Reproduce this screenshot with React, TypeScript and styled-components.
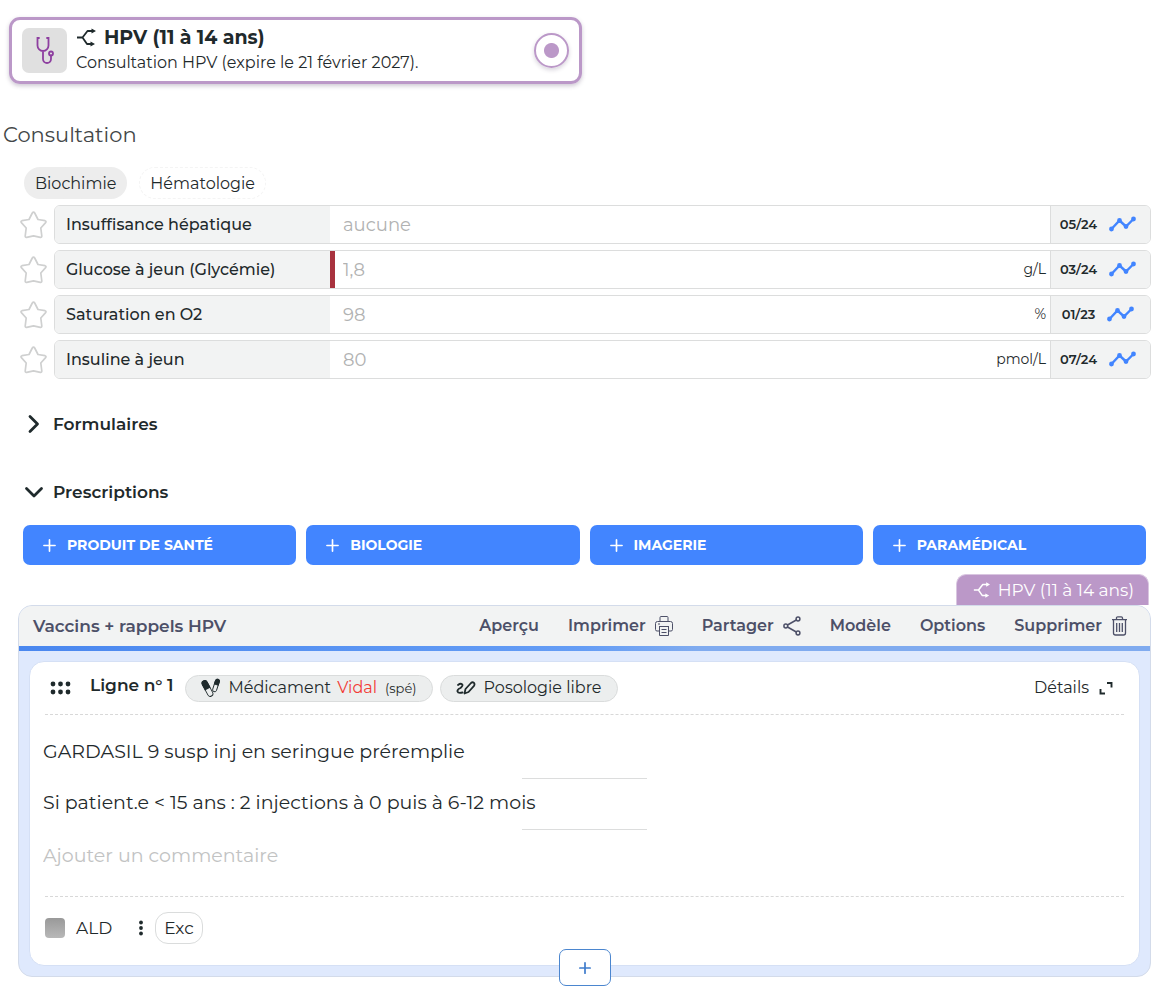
import React from "react";
import styled, { createGlobalStyle } from "styled-components";

const ink = "#1f2a2c";
const slate = "#4d5068";
const blue = "#4285ff";
const mauve = "#bb98c8";
const line = "#dcdddd";
const soft = "#f2f3f3";

const GlobalStyle = createGlobalStyle`
  *, *::before, *::after { box-sizing: border-box; }
  body { margin: 0; background: #fff; color: ${ink}; font-family: Montserrat, Inter, "Liberation Sans", sans-serif; font-size: 16px; line-height: 24px; }
  button, input { font: inherit; color: inherit; }
  button { background: none; border: 0; padding: 0; cursor: pointer; }
  h1, h2, p { margin: 0; }
  svg { display: block; flex: none; }
`;

const Page = styled.main`
  padding: 17px 9px 13px;
`;

const PathwayCard = styled.label`
  display: flex;
  align-items: center;
  gap: 9px;
  max-width: 573px;
  height: 67px;
  padding: 0 10px;
  border: 3px solid ${mauve};
  border-radius: 11px;
  box-shadow: 0 2px 4px rgba(60, 40, 80, 0.25);
`;

const PathwayIcon = styled.span`
  display: grid;
  place-items: center;
  flex: none;
  width: 45px;
  height: 45px;
  border-radius: 7px;
  background: #e0e0e0;
  color: #8e3fa0;
`;

const PathwayText = styled.span`
  flex: 1;
  display: flex;
  flex-direction: column;
  padding-bottom: 1px;
`;

const PathwayTitle = styled.span`
  display: flex;
  align-items: center;
  gap: 8px;
  font-size: 19px;
  line-height: 26px;
  font-weight: 700;
`;

const PathwayNote = styled.span`
  font-size: 16px;
  line-height: 24px;
`;

const PathwayRadio = styled.input`
  appearance: none;
  flex: none;
  width: 35px;
  height: 35px;
  margin: 0;
  border: 2px solid ${mauve};
  border-radius: 50%;
  background: radial-gradient(circle, ${mauve} 7px, #fff 8px);
  box-shadow: 0 2px 4px rgba(60, 40, 80, 0.2);
`;

const PageTitle = styled.h1`
  margin: 37px 0 0 -6px;
  font-size: 21px;
  line-height: 28px;
  font-weight: 400;
  color: #434748;
`;

const Tabs = styled.div`
  display: flex;
  gap: 12px;
  margin: 18px 0 6px 15px;
`;

const Tab = styled.button<{ $active?: boolean }>`
  height: 32px;
  padding: 1px 10px 0;
  border-radius: 16px;
  background: ${(p) => (p.$active ? "#ededed" : "#fff")};
  border: 1px dashed ${(p) => (p.$active ? "#ededed" : "#f4f4f4")};
`;

const Measures = styled.div`
  display: flex;
  flex-direction: column;
  gap: 6px;
  padding-left: 11px;
`;

const MeasureRow = styled.div`
  display: flex;
  align-items: center;
  gap: 7px;
`;

const StarButton = styled.button`
  flex: none;
  color: #cfd0d0;
`;

const MeasureBox = styled.div`
  flex: 1;
  min-width: 0;
  display: flex;
  height: 39px;
  border: 1px solid ${line};
  border-radius: 6px;
  overflow: hidden;
`;

const MeasureLabel = styled.label`
  flex: none;
  width: 275px;
  padding-left: 11px;
  background: ${soft};
  font-weight: 500;
  line-height: 37px;
`;

const MeasureInput = styled.input<{ $alert?: boolean }>`
  flex: 1;
  min-width: 0;
  padding: 0 ${(p) => (p.$alert ? "8px" : "13px")};
  border: 0;
  border-left: ${(p) => (p.$alert ? "5px solid #a8323e" : "0")};
  outline: none;
  background: transparent;
  font-size: 18px;
  &::placeholder { color: #b1b2b2; opacity: 1; }
`;

const Unit = styled.span`
  padding-right: 4px;
  font-size: 14px;
  line-height: 37px;
`;

const HistoryButton = styled.button`
  display: flex;
  align-items: center;
  justify-content: center;
  gap: 12px;
  flex: none;
  width: 100px;
  padding: 0 5px 2px 0;
  border-left: 1px solid ${line};
  background: ${soft};
  font-size: 13px;
  font-weight: 600;
  svg { color: ${blue}; }
`;

const SectionToggle = styled.button`
  display: flex;
  align-items: center;
  gap: 9px;
  margin: 33px 0 0 15px;
  font-size: 17px;
  font-weight: 600;
  line-height: 24px;
  & + & { margin-top: 44px; }
`;

const AddBar = styled.div`
  display: grid;
  grid-template-columns: repeat(4, 1fr);
  gap: 10px;
  margin: 21px 5px 0 14px;
`;

const AddButton = styled.button`
  display: flex;
  align-items: center;
  gap: 11px;
  height: 40px;
  padding: 0 20px;
  border-radius: 7px;
  background: ${blue};
  color: #fff;
  font-size: 14px;
  font-weight: 700;
`;

const PathwayTag = styled.div`
  display: flex;
  align-items: center;
  gap: 8px;
  width: fit-content;
  height: 31px;
  margin: 9px 2px 0 auto;
  padding: 0 14px 0 16px;
  border: 1px solid #d9c6e0;
  border-bottom: 0;
  border-radius: 10px 10px 0 0;
  background: ${mauve};
  color: #fff;
  font-size: 17px;
`;

const Prescription = styled.section`
  position: relative;
  margin-left: 9px;
  border: 1px solid #d3dbea;
  border-radius: 14px;
  background: #dfe9fd;
`;

const PrescriptionHeader = styled.header`
  display: flex;
  align-items: center;
  justify-content: space-between;
  height: 40px;
  padding: 0 22px 0 14px;
  border-radius: 13px 13px 0 0;
  background: ${soft};
  color: ${slate};
`;

const PrescriptionTitle = styled.h2`
  font-size: 17px;
  font-weight: 600;
`;

const Actions = styled.nav`
  display: flex;
  gap: 29px;
`;

const Action = styled.button`
  display: flex;
  align-items: center;
  gap: 9px;
  font-weight: 600;
`;

const Accent = styled.div`
  height: 5px;
  background: linear-gradient(90deg, #4a87ef, #659df5 50%, #80abef 60%, #80abef);
`;

const LineCard = styled.article`
  margin: 10px;
  padding: 0 15px;
  border: 1px solid #d5e0f5;
  border-radius: 15px;
  background: #fff;
`;

const LineHeader = styled.div`
  display: flex;
  align-items: center;
  height: 53px;
  border-bottom: 1px dashed #d8d8d8;
`;

const Grip = styled.button`
  padding: 0 19px 0 5px;
`;

const LineName = styled.h2`
  margin-right: 12px;
  padding-bottom: 6px;
  font-size: 17px;
  line-height: 24px;
  font-weight: 600;
`;

const Chip = styled.button`
  display: flex;
  align-items: center;
  gap: 8px;
  height: 27px;
  margin-right: 7px;
  padding: 0 15px;
  border: 1px solid #dadcdc;
  border-radius: 14px;
  background: #eceeee;
`;

const Brand = styled.span`
  margin-left: 2px;
  color: #f23c35;
`;

const Small = styled.small`
  font-size: 13px;
`;

const Details = styled.button`
  display: flex;
  align-items: center;
  gap: 10px;
  margin-left: auto;
  padding-right: 11px;
`;

const Entry = styled.p`
  margin-left: -2px;
  font-size: 19px;
  line-height: 26px;
`;

const Divider = styled.hr`
  width: 125px;
  height: 1px;
  margin: 13px auto 11px;
  border: 0;
  background: ${line};
`;

const Body = styled.div`
  padding: 24px 0 27px;
  border-bottom: 1px dashed #d8d8d8;
`;

const CommentInput = styled.input`
  display: block;
  width: 100%;
  height: 28px;
  margin: 10px 0 0 -2px;
  padding: 0;
  border: 0;
  outline: none;
  font-size: 19px;
  &::placeholder { color: #c2c3c3; opacity: 1; }
`;

const LineFooter = styled.div`
  display: flex;
  align-items: center;
  height: 68px;
  padding-bottom: 7px;
  font-size: 17px;
`;

const AldLabel = styled.label`
  display: flex;
  align-items: center;
  gap: 11px;
`;

const AldCheck = styled.input`
  appearance: none;
  width: 20px;
  height: 20px;
  margin: 0;
  border-radius: 4px;
  background: linear-gradient(#999, #b8b8b8);
`;

const MoreButton = styled.button`
  margin: 0 11px 0 26px;
`;

const ExcButton = styled.button`
  height: 32px;
  padding: 0 8px;
  border: 1px solid #dadcdc;
  border-radius: 13px;
`;

const AddLine = styled.button`
  position: absolute;
  left: 50%;
  bottom: -10px;
  transform: translateX(-50%);
  display: grid;
  place-items: center;
  width: 52px;
  height: 37px;
  border: 1px solid #4b86cf;
  border-radius: 7px;
  background: #fff;
  color: #3f7ccc;
`;

const SplitIcon = ({ size = 20 }: { size?: number }) => (
  <svg width={size} height={size} viewBox="0 0 20 20" fill="none" stroke="currentColor" strokeWidth="1.800" strokeLinejoin="round" aria-hidden="true">
    <path d="M1 9.500h5.500L11.500 3H17M6.500 9.500l4.500 6.500h4.500" />
    <path d="M15.500.4 20 3l-4.500 2.600zM14.500 13.400 19 16l-4.500 2.600z" fill="currentColor" stroke="none" />
  </svg>
);

const StethoscopeIcon = () => (
  <svg width="20" height="30" viewBox="0 0 20 30" fill="none" stroke="currentColor" strokeWidth="1.800" strokeLinecap="round" aria-hidden="true">
    <path d="M4 2H2.500v7.500a5.500 5.500 0 0 0 11 0V2H12M8 15v8a4 4 0 0 0 8 0v-3.500" />
    <circle cx="16" cy="17.500" r="2" />
  </svg>
);

const StarIcon = () => (
  <svg width="27" height="28" viewBox="0 0 27 28" fill="none" stroke="currentColor" strokeWidth="1.700" strokeLinejoin="round" aria-hidden="true">
    <path d="M12.300 2q1.200-1.800 2.400 0l3.300 6.500 7 1.200q1.600.5.600 1.900L20.800 17l1 8q0 1.800-1.500 1.300l-6.800-1.500-6.800 1.500Q5.200 26.800 5.200 25l1-8-4.800-5.400q-1-1.400.6-1.900l7-1.200z" />
  </svg>
);

const TrendIcon = () => (
  <svg width="27" height="16" viewBox="0 0 27 16" fill="currentColor" stroke="currentColor" strokeWidth="2.400" aria-hidden="true">
    <path d="M2.500 13 10.500 4.500l6.500 6L24.500 3" fill="none" />
    <circle cx="2.500" cy="13" r="1.200" />
    <circle cx="10.500" cy="4.500" r="1.200" />
    <circle cx="17" cy="10.500" r="1.200" />
    <circle cx="24.500" cy="3" r="1.200" />
  </svg>
);

const Chevron = ({ open }: { open?: boolean }) => (
  <svg width="20" height="20" viewBox="0 0 20 20" fill="none" stroke="currentColor" strokeWidth="2.800" strokeLinecap="round" strokeLinejoin="round" aria-hidden="true">
    <path d={open ? "M2.500 6.500 10 14l7.500-7.500" : "M6 2.500 13.500 10 6 17.500"} />
  </svg>
);

const PlusIcon = ({ size, weight }: { size: number; weight: number }) => (
  <svg width={size} height={size} viewBox="0 0 14 14" stroke="currentColor" strokeWidth={weight} strokeLinecap="round" aria-hidden="true">
    <path d="M7 1v12M1 7h12" />
  </svg>
);

const PrinterIcon = () => (
  <svg width="18" height="20" viewBox="0 0 18 20" fill="none" stroke="currentColor" strokeWidth="1" strokeLinejoin="round" aria-hidden="true">
    <path d="M5 5.500v-4q0-1 1-1h6q1 0 1 1v4M4.500 15H2q-1.500 0-1.500-1.500V7.500Q.5 5.500 2.500 5.500h13q2 0 2 2v6Q17.500 15 16 15h-2.500M4 10.500h10M4.500 10.500h9v9h-9zM6.500 13.500h5M6.500 16.500h5M3 8h2" />
  </svg>
);

const ShareIcon = () => (
  <svg width="18" height="20" viewBox="0 0 18 20" fill="none" stroke="currentColor" strokeWidth="1.500" aria-hidden="true">
    <circle cx="2.800" cy="10" r="1.900" />
    <circle cx="15" cy="3" r="1.900" />
    <circle cx="15" cy="17" r="1.900" />
    <path d="M4.500 9 13.300 4M4.500 11l8.800 5" />
  </svg>
);

const TrashIcon = () => (
  <svg width="17" height="20" viewBox="0 0 17 20" fill="none" stroke="currentColor" strokeWidth="1.300" aria-hidden="true">
    <path d="M1 3.700h15M5.500 3.500V2q0-1.200 1.200-1.200h3.600Q11.500.8 11.500 2v1.500M2.500 4v13q0 2 2 2h8q2 0 2-2V4M5.700 7v9M8.500 7v9M11.300 7v9" />
  </svg>
);

const GripIcon = () => (
  <svg width="21" height="14" viewBox="0 0 21 14" fill="currentColor" aria-hidden="true">
    {[3, 10.5, 18].map((x) => [3, 11].map((y) => <circle key={`${x}-${y}`} cx={x} cy={y} r="2.400" />))}
  </svg>
);

const PillsIcon = () => (
  <svg width="19" height="20" viewBox="0 0 19 20" fill="none" stroke="currentColor" aria-hidden="true">
    <g transform="translate(6.500 10.500) rotate(-28)">
      <rect x="-2.700" y="-8.500" width="5.400" height="17" rx="2.700" strokeWidth="0.900" />
      <path d="M-2.700 0v-5.800a2.700 2.700 0 0 1 5.400 0V0z" fill="currentColor" />
    </g>
    <g transform="translate(15 7.500) rotate(18)">
      <rect x="-2" y="-6.500" width="4" height="13" rx="2" strokeWidth="0.900" />
      <path d="M-2-1v-3.500a2 2 0 0 1 4 0V-1z" fill="currentColor" />
    </g>
  </svg>
);

const ScribbleIcon = () => (
  <svg width="20" height="14" viewBox="0 0 20 14" fill="none" stroke="currentColor" strokeWidth="1.800" strokeLinecap="round" strokeLinejoin="round" aria-hidden="true">
    <path d="M2 4Q4.500 2 6 3.200T4.500 7Q1 8.500 1.500 10.500T6.500 11.500M8.500 12.500l1-4.500L15 2q1.500-1.300 2.800-.2t.2 3L12.500 11z" />
  </svg>
);

const ExpandIcon = () => (
  <svg width="14" height="14" viewBox="0 0 14 14" fill="none" stroke="currentColor" strokeWidth="1.900" aria-hidden="true">
    <path d="M8 2h4.500v4.500M1.500 8v4.500H6" />
  </svg>
);

const DotsIcon = () => (
  <svg width="6" height="16" viewBox="0 0 6 16" fill="currentColor" aria-hidden="true">
    <circle cx="3" cy="2.500" r="1.900" />
    <circle cx="3" cy="8" r="1.900" />
    <circle cx="3" cy="13.500" r="1.900" />
  </svg>
);

const measures = [
  { id: "hepatique", label: "Insuffisance hépatique", value: "aucune", unit: "", date: "05/24" },
  { id: "glucose", label: "Glucose à jeun (Glycémie)", value: "1,8", unit: "g/L", date: "03/24", alert: true },
  { id: "saturation", label: "Saturation en O2", value: "98", unit: "%", date: "01/23" },
  { id: "insuline", label: "Insuline à jeun", value: "80", unit: "pmol/L", date: "07/24" },
];

const products = ["PRODUIT DE SANTÉ", "BIOLOGIE", "IMAGERIE", "PARAMÉDICAL"];

export default function App() {
  return (
    <>
      <GlobalStyle />
      <Page>
        <PathwayCard>
          <PathwayIcon><StethoscopeIcon /></PathwayIcon>
          <PathwayText>
            <PathwayTitle><SplitIcon />HPV (11 à 14 ans)</PathwayTitle>
            <PathwayNote>Consultation HPV (expire le 21 février 2027).</PathwayNote>
          </PathwayText>
          <PathwayRadio type="radio" name="pathway" defaultChecked />
        </PathwayCard>

        <PageTitle>Consultation</PageTitle>

        <Tabs>
          <Tab $active>Biochimie</Tab>
          <Tab>Hématologie</Tab>
        </Tabs>
        <Measures>
          {measures.map((m) => (
            <MeasureRow key={m.id}>
              <StarButton aria-label={`Favori : ${m.label}`}><StarIcon /></StarButton>
              <MeasureBox>
                <MeasureLabel htmlFor={m.id}>{m.label}</MeasureLabel>
                <MeasureInput id={m.id} placeholder={m.value} $alert={m.alert} />
                <Unit>{m.unit}</Unit>
                <HistoryButton>{m.date}<TrendIcon /></HistoryButton>
              </MeasureBox>
            </MeasureRow>
          ))}
        </Measures>

        <SectionToggle aria-expanded="false"><Chevron />Formulaires</SectionToggle>
        <SectionToggle aria-expanded="true"><Chevron open />Prescriptions</SectionToggle>

        <AddBar>
          {products.map((p) => (
            <AddButton key={p}><PlusIcon size={13} weight={1.8} />{p}</AddButton>
          ))}
        </AddBar>

        <PathwayTag><SplitIcon size={17} />HPV (11 à 14 ans)</PathwayTag>
        <Prescription>
          <PrescriptionHeader>
            <PrescriptionTitle>Vaccins + rappels HPV</PrescriptionTitle>
            <Actions>
              <Action>Aperçu</Action>
              <Action>Imprimer<PrinterIcon /></Action>
              <Action>Partager<ShareIcon /></Action>
              <Action>Modèle</Action>
              <Action>Options</Action>
              <Action>Supprimer<TrashIcon /></Action>
            </Actions>
          </PrescriptionHeader>
          <Accent />
          <LineCard>
            <LineHeader>
              <Grip aria-label="Déplacer la ligne"><GripIcon /></Grip>
              <LineName>Ligne n° 1</LineName>
              <Chip><PillsIcon /><span>Médicament <Brand>Vidal</Brand></span><Small>(spé)</Small></Chip>
              <Chip><ScribbleIcon />Posologie libre</Chip>
              <Details>Détails<ExpandIcon /></Details>
            </LineHeader>
            <Body>
              <Entry>GARDASIL 9 susp inj en seringue préremplie</Entry>
              <Divider />
              <Entry>Si patient.e &lt; 15 ans : 2 injections à 0 puis à 6-12 mois</Entry>
              <Divider />
              <CommentInput placeholder="Ajouter un commentaire" aria-label="Commentaire" />
            </Body>
            <LineFooter>
              <AldLabel><AldCheck type="checkbox" />ALD</AldLabel>
              <MoreButton aria-label="Plus d'options"><DotsIcon /></MoreButton>
              <ExcButton>Exc</ExcButton>
            </LineFooter>
          </LineCard>
          <AddLine aria-label="Ajouter une ligne"><PlusIcon size={12} weight={2} /></AddLine>
        </Prescription>
      </Page>
    </>
  );
}
